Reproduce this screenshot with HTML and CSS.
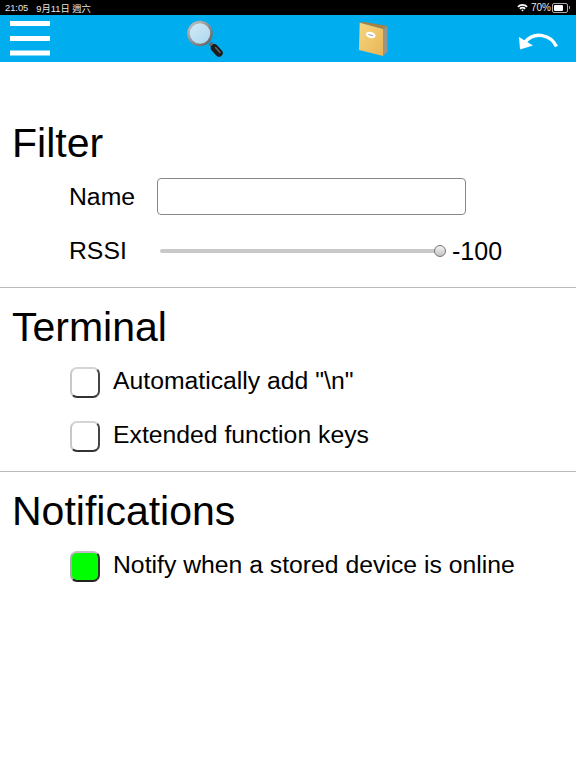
FILE: index.html
```html
<!DOCTYPE html>
<html lang="en">
<head>
    <meta charset="UTF-8">
    <meta name="viewport" content="width=device-width, initial-scale=1.0">
    <title>Settings</title>
    <link rel="stylesheet" href="styles.css">
</head>
<body>

    <!-- Status bar -->
    <div class="status-bar">
        <span class="status-time">21:05</span>
        <span class="status-date">9月11日 週六</span>
        <span class="status-right">
            <svg class="wifi-icon" width="11" height="9" viewBox="0 0 11 9">
                <path d="M0.3 3.2 A7.4 7.4 0 0 1 10.7 3.2 L9.5 4.4 A5.7 5.7 0 0 0 1.5 4.4 Z" fill="#fff"/>
                <path d="M2.3 5.2 A4.5 4.5 0 0 1 8.7 5.2 L7.5 6.4 A2.8 2.8 0 0 0 3.5 6.4 Z" fill="#fff"/>
                <path d="M4.2 7.1 A1.8 1.8 0 0 1 6.8 7.1 L5.5 8.5 Z" fill="#fff"/>
            </svg>
            <span class="battery-text">70%</span>
            <span class="battery"><span class="battery-level"></span></span>
            <span class="battery-nub"></span>
        </span>
    </div>

    <!-- Toolbar -->
    <div class="toolbar">
        <svg class="icon-menu" width="40" height="36" viewBox="0 0 40 36">
            <rect x="0" y="0" width="40" height="5" fill="#fff"/>
            <rect x="0" y="15" width="40" height="5" fill="#fff"/>
            <rect x="0" y="29.5" width="40" height="5" fill="#fff"/>
        </svg>
        <svg class="icon-search" width="38" height="38" viewBox="0 0 38 38">
            <defs>
                <linearGradient id="lens" x1="0" y1="0" x2="1" y2="1">
                    <stop offset="0" stop-color="#d4ecf7"/>
                    <stop offset="1" stop-color="#a9d5ee"/>
                </linearGradient>
                <linearGradient id="rim" x1="0" y1="0" x2="1" y2="1">
                    <stop offset="0" stop-color="#c4c4c4"/>
                    <stop offset="1" stop-color="#5f5f5f"/>
                </linearGradient>
            </defs>
            <line x1="24" y1="23" x2="28" y2="27.5" stroke="#666" stroke-width="4"/>
            <line x1="28.5" y1="28" x2="33" y2="33" stroke="#1c1c1c" stroke-width="7.5" stroke-linecap="round"/>
            <line x1="29.5" y1="27.5" x2="34" y2="32.5" stroke="#666" stroke-width="1.5" stroke-linecap="round"/>
            <circle cx="14" cy="13.5" r="11.5" fill="url(#lens)" stroke="url(#rim)" stroke-width="2.5"/>
        </svg>
        <svg class="icon-book" width="32" height="38" viewBox="0 0 32 38">
            <defs>
                <linearGradient id="cover" x1="0" y1="0" x2="1" y2="1">
                    <stop offset="0" stop-color="#f8d680"/>
                    <stop offset="1" stop-color="#e8b455"/>
                </linearGradient>
            </defs>
            <polygon points="1.7,2.7 5,1.7 29.5,6 25,9" fill="#a9803f"/>
            <polygon points="25,9 29.5,6 29.5,32 25,36" fill="#9a9488"/>
            <polygon points="1.7,2.7 25,9 25,36 1,30" fill="url(#cover)"/>
            <ellipse cx="12.7" cy="15" rx="5" ry="3" transform="rotate(15 12.7 15)" fill="#fff"/>
            <line x1="10.5" y1="14.5" x2="15" y2="15.7" stroke="#999" stroke-width="1"/>
        </svg>
        <svg class="icon-back" width="42" height="22" viewBox="0 0 42 22">
            <path d="M39.5 16.5 C34 5 18 0 7 13" fill="none" stroke="#fff" stroke-width="3.4"/>
            <polygon points="3,19.5 2,7 16,15.5" fill="#fff"/>
        </svg>
    </div>

    <div class="content">
        <!-- Filter -->
        <section class="section">
            <h2>Filter</h2>
            <div class="row">
                <label class="row-label" for="nameInput">Name</label>
                <input type="text" id="nameInput" class="text-input">
            </div>
            <div class="row">
                <label class="row-label" for="rssiInput">RSSI</label>
                <input type="range" id="rssiInput" class="slider" min="-100" max="0" value="-100">
                <span class="slider-value">-100</span>
            </div>
        </section>

        <!-- Terminal -->
        <section class="section">
            <h2>Terminal</h2>
            <div class="row">
                <input type="checkbox" id="addNewline" class="check">
                <label for="addNewline">Automatically add "\n"</label>
            </div>
            <div class="row">
                <input type="checkbox" id="extendedKeys" class="check">
                <label for="extendedKeys">Extended function keys</label>
            </div>
        </section>

        <!-- Notifications -->
        <section class="section last">
            <h2>Notifications</h2>
            <div class="row">
                <input type="checkbox" id="notifyOnline" class="check" checked>
                <label for="notifyOnline">Notify when a stored device is online</label>
            </div>
        </section>
    </div>

</body>
</html>
```

FILE: styles.css
```css
body {
    margin: 0;
    font-family: "Liberation Sans", Arial, sans-serif;
    background-color: #fff;
    color: #000;
}
.status-bar {
    display: flex;
    align-items: center;
    height: 15px;
    padding: 0 6px 0 5px;
    background-color: #000;
    color: #e8e8e8;
    font-family: "Liberation Sans", "Noto Sans CJK TC", sans-serif;
    font-size: 9.3px;
}
.status-date {
    margin-left: 8px;
}
.status-right {
    display: flex;
    align-items: center;
    margin-left: auto;
}
.battery-text {
    margin-left: 3px;
    font-size: 10px;
}
.battery {
    display: block;
    width: 12px;
    height: 6px;
    margin-left: 1px;
    padding: 1px;
    border: 1px solid #aaa;
    border-radius: 2px;
}
.battery-level {
    display: block;
    width: 75%;
    height: 100%;
    background-color: #fff;
    border-radius: 1px;
}
.battery-nub {
    width: 1px;
    height: 3px;
    margin-left: 1px;
    background-color: #999;
}
.toolbar {
    display: flex;
    align-items: flex-start;
    height: 47px;
    padding-left: 10px;
    background-color: #00adef;
}
.icon-menu {
    margin-top: 6px;
}
.icon-search {
    margin-top: 5px;
    margin-left: 136px;
}
.icon-book {
    margin-top: 5px;
    margin-left: 134px;
}
.icon-back {
    margin-top: 15px;
    margin-left: 127px;
}
.content {
    padding-top: 42px;
}
.section {
    padding: 15px 0 9px;
    border-bottom: 1px solid #bbb;
    height: 159px;
}
.section.last {
    border-bottom: none;
}
h2 {
    margin: 0 0 3px 12px;
    font-size: 41px;
    font-weight: normal;
    line-height: 48px;
}
.row {
    display: flex;
    align-items: center;
    height: 54px;
    padding-left: 69px;
    font-size: 24.75px;
}
.row-label {
    width: 88px;
}
.text-input {
    box-sizing: border-box;
    width: 309px;
    height: 37px;
    margin-top: -2px;
    padding: 0 6px;
    border: 1px solid #888;
    border-radius: 4px;
    background-color: #fff;
}
.slider {
    -webkit-appearance: none;
    appearance: none;
    direction: rtl;
    width: 286px;
    height: 14px;
    margin: 0 0 0 3px;
    background: none;
}
.slider::-webkit-slider-runnable-track {
    height: 4px;
    border-radius: 2px;
    background-color: #c8c8c8;
}
.slider::-webkit-slider-thumb {
    -webkit-appearance: none;
    appearance: none;
    box-sizing: border-box;
    width: 12px;
    height: 12px;
    margin-top: -4px;
    border: 1px solid #777;
    border-radius: 50%;
    background: linear-gradient(#f2f2f2, #c4c4c4);
}
.slider-value {
    margin-left: 6px;
    font-size: 25px;
}
.check {
    -webkit-appearance: none;
    appearance: none;
    box-sizing: border-box;
    width: 30px;
    height: 31px;
    margin: 3px 13px 0 1px;
    border: 2px solid;
    border-color: #d4d4d4 #444 #333 #c8c8c8;
    border-radius: 7px;
    background-color: #fff;
}
.check:checked {
    border-color: #c9b8c9 #333 #222 #aaa;
    background-color: #00ff00;
}
```
